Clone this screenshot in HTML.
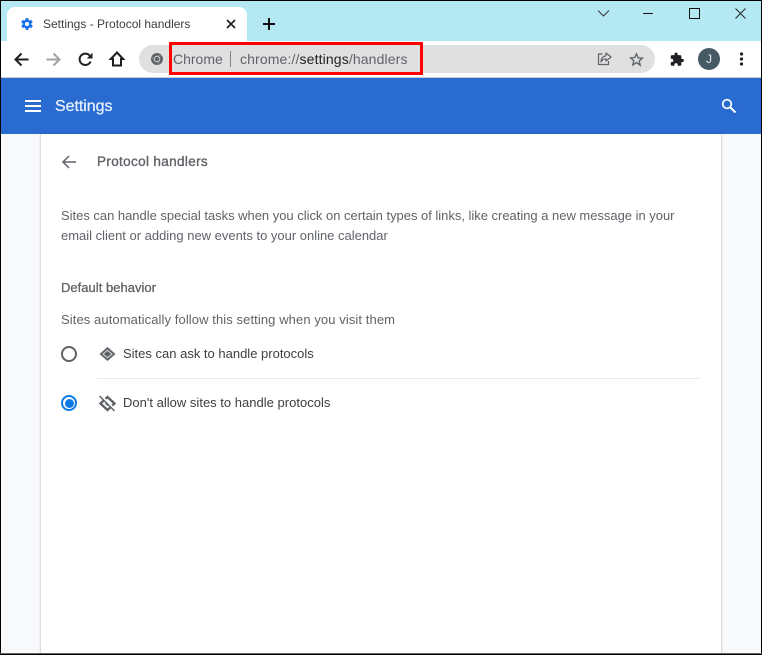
<!DOCTYPE html>
<html><head><meta charset="utf-8"><style>
html,body{margin:0;padding:0}
body{width:762px;height:655px;position:relative;overflow:hidden;background:#f8f9fa;font-family:"Liberation Sans",sans-serif}
.a{position:absolute}
.t{position:absolute;white-space:nowrap;line-height:16px}
svg{position:absolute;overflow:visible}
</style></head><body>
<div class="a" style="left:0;top:0;width:762px;height:41px;background:#b4e9f3"></div>
<div class="a" style="left:7px;top:7px;width:240px;height:34px;background:#fff;border-radius:8px 8px 0 0"></div>
<div class="a" style="left:0;top:41px;width:762px;height:36px;background:#fff"></div>
<div class="a" style="left:0;top:77px;width:762px;height:1px;background:#c8ccd0"></div>
<div class="a" style="left:0;top:78px;width:762px;height:56px;background:#296bd1"></div>
<div class="a" style="left:41px;top:134px;width:680px;height:521px;background:#fff;box-shadow:0 0 2px rgba(60,64,67,.45)"></div>

<svg style="left:20px;top:17px" width="14" height="14" viewBox="0 0 24 24"><path fill="#1a73e8" d="M19.4 13c.1-.3.1-.7.1-1s0-.7-.1-1l2.100-1.600c.2-.2.2-.4.1-.6l-2-3.500c-.1-.2-.4-.3-.6-.2l-2.500 1c-.5-.4-1.100-.7-1.700-1l-.4-2.600c0-.3-.2-.5-.5-.5h-4c-.3 0-.5.2-.5.4l-.4 2.700c-.6.2-1.200.6-1.700 1l-2.500-1c-.2-.1-.5 0-.6.2l-2 3.500c-.1.2-.1.4.1.6L4.600 11c-.1.3-.1.7-.1 1s0 .7.1 1l-2.100 1.600c-.2.2-.2.4-.1.6l2 3.500c.1.2.4.3.6.2l2.500-1c.5.4 1.100.7 1.700 1l.4 2.600c0 .3.2.5.5.5h4c.3 0 .5-.2.5-.4l.4-2.700c.6-.2 1.200-.6 1.700-1l2.500 1c.2.1.5 0 .6-.2l2-3.500c.1-.2.1-.4-.1-.6zM12 15.500a3.500 3.500 0 1 1 0-7 3.500 3.500 0 0 1 0 7z"/></svg>
<div class="t" style="left:43px;top:16px;font-size:12px;color:#3c4043;letter-spacing:0">Settings - Protocol handlers</div>
<svg style="left:226px;top:19px" width="10" height="10"><path d="M1 1l8 8M9 1l-8 8" stroke="#202124" stroke-width="1.700"/></svg>
<svg style="left:262px;top:17px" width="14" height="14"><path d="M7 1v12M1 7h12" stroke="#111" stroke-width="2"/></svg>

<svg style="left:597px;top:9px" width="14" height="9"><path d="M1 1.500l5.500 5.500 5.500-5.500" fill="none" stroke="#333" stroke-width="1"/></svg>
<div class="a" style="left:643px;top:13px;width:10px;height:1px;background:#111"></div>
<div class="a" style="left:689px;top:8px;width:9px;height:9px;border:1px solid #111"></div>
<svg style="left:735px;top:8px" width="11" height="11"><path d="M.5.500l10 10M10.500.500l-10 10" stroke="#222" stroke-width="1"/></svg>

<svg style="left:14px;top:52px" width="15" height="15"><path d="M14.500 7.500H2M7.500 1.500l-6 6 6 6" fill="none" stroke="#1d1d1f" stroke-width="2"/></svg>
<svg style="left:46px;top:52px" width="15" height="15"><path d="M.5 7.500H13M7.500 1.500l6 6-6 6" fill="none" stroke="#a0a3a6" stroke-width="2"/></svg>
<svg style="left:78px;top:52px" width="15" height="15" viewBox="0 0 15 15"><path d="M12.600 9.500A5.700 5.700 0 1 1 11.600 3.500" fill="none" stroke="#1d1d1f" stroke-width="2"/><path d="M14.500.800V6.500H8.800z" fill="#1d1d1f"/></svg>
<svg style="left:109px;top:51px" width="16" height="16"><path d="M8 1.500L1.800 8H4v6.500h8V8h2.200z" fill="none" stroke="#1d1d1f" stroke-width="2" stroke-linejoin="miter"/></svg>

<div class="a" style="left:139px;top:45px;width:516px;height:28px;border-radius:14px;background:#e0e0e0"></div>
<svg style="left:151px;top:53px" width="12" height="12"><circle cx="6" cy="6" r="6" fill="#5f6368"/><circle cx="6" cy="6" r="3.200" fill="#d8d8d8"/><circle cx="6" cy="6" r="2.300" fill="#5f6368"/><path d="M6 2.800h5M3.200 7.600L.8 3.500M8.800 7.600L6.300 12" stroke="#9a9a9a" stroke-width=".6"/></svg>
<div class="t" style="left:173px;top:51px;font-size:14px;color:#5f6368">Chrome</div>
<div class="a" style="left:230px;top:51px;width:1px;height:16px;background:#80868b"></div>
<div class="t" style="left:240px;top:51px;font-size:14px;color:#5f6368;letter-spacing:.13px">chrome://<span style="color:#202124">settings</span>/handlers</div>
<div class="a" style="left:169px;top:42px;width:248px;height:27px;border:3px solid #f00"></div>

<svg style="left:597px;top:52px" width="15" height="14" viewBox="0 0 15 14"><path d="M5.500 2H1.500v10.500h10V9" fill="none" stroke="#5f6368" stroke-width="1.200"/><path d="M9 1l5 4-5 4V6.800C6.500 6.800 5 7.800 4 10c0-3.500 2-6 5-6.200z" fill="none" stroke="#5f6368" stroke-width="1.200" stroke-linejoin="round"/></svg>
<svg style="left:629px;top:52px" width="15" height="15" viewBox="0 0 24 24"><path d="M12 3l2.700 6.300 6.800.6-5.200 4.500 1.600 6.700L12 17l-5.900 3.600 1.600-6.700-5.200-4.500 6.800-.6z" fill="none" stroke="#5f6368" stroke-width="2.200"/></svg>
<svg style="left:669px;top:52px" width="16" height="15" viewBox="0 0 24 24"><path fill="#202124" d="M20.500 11H19V7c0-1.100-.9-2-2-2h-4V3.500a2.500 2.500 0 0 0-5 0V5H4c-1.100 0-2 .9-2 2v3.800h1.500c1.500 0 2.700 1.200 2.700 2.700S5 16.200 3.500 16.200H2V20c0 1.100.9 2 2 2h3.800v-1.500c0-1.500 1.200-2.700 2.700-2.700s2.700 1.200 2.700 2.700V22H17c1.100 0 2-.9 2-2v-4h1.500a2.500 2.500 0 0 0 0-5z"/></svg>
<div class="a" style="left:698px;top:48px;width:22px;height:22px;border-radius:50%;background:#455a64;color:#e8ecee;font-size:12px;line-height:22px;text-align:center">J</div>
<svg style="left:739px;top:52px" width="5" height="14"><circle cx="2.500" cy="2" r="1.600" fill="#202124"/><circle cx="2.500" cy="7" r="1.600" fill="#202124"/><circle cx="2.500" cy="12" r="1.600" fill="#202124"/></svg>

<svg style="left:25px;top:100px" width="16" height="12"><path d="M0 1h16M0 6h16M0 11h16" stroke="#fff" stroke-width="2"/></svg>
<div class="t" style="left:55px;top:99px;font-size:16px;letter-spacing:-.05px;color:#e8f0fe;-webkit-text-stroke:.25px #e8f0fe">Settings</div>
<svg style="left:721px;top:98px" width="16" height="16"><circle cx="6" cy="6" r="4.300" fill="none" stroke="#fff" stroke-width="1.700"/><path d="M9.300 9.300l5.200 5.200" stroke="#fff" stroke-width="2"/></svg>

<svg style="left:61px;top:155px" width="15" height="14"><path d="M15 7H2M8 1L2 7l6 6" fill="none" stroke="#5f6368" stroke-width="1.500"/></svg>
<div class="t" style="left:97px;top:154px;font-size:13.500px;letter-spacing:.35px;color:#5f6368;-webkit-text-stroke:.35px #5f6368">Protocol handlers</div>

<div class="t" style="left:61px;top:208px;font-size:13px;color:#5f6368;letter-spacing:-.02px">Sites can handle special tasks when you click on certain types of links, like creating a new message in your</div>
<div class="t" style="left:61px;top:228px;font-size:13px;color:#5f6368;letter-spacing:-.01px">email client or adding new events to your online calendar</div>
<div class="t" style="left:61px;top:280px;font-size:13px;color:#5f6368;letter-spacing:.02px;-webkit-text-stroke:.3px #5f6368">Default behavior</div>
<div class="t" style="left:61px;top:312px;font-size:13px;color:#5f6368;letter-spacing:.09px">Sites automatically follow this setting when you visit them</div>

<div class="a" style="left:61px;top:346px;width:12px;height:12px;border:2px solid #5f6368;border-radius:50%"></div>
<svg style="left:99px;top:346px" width="17" height="16" viewBox="0 0 17 16"><path d="M8.500 1L16.500 8 8.500 15 .5 8z" fill="#5f6368"/><path d="M8.500 4.200L13 8 8.500 11.800 4 8z" fill="#5f6368" stroke="#d5d6d8" stroke-width="1"/></svg>
<div class="t" style="left:123px;top:346px;font-size:13px;color:#3c4043;letter-spacing:0">Sites can ask to handle protocols</div>
<div class="a" style="left:97px;top:378px;width:603px;height:1px;background:#e8eaed"></div>
<div class="a" style="left:61px;top:395px;width:12px;height:12px;border:2px solid #0d7ae6;border-radius:50%"></div>
<div class="a" style="left:64.500px;top:398.500px;width:9px;height:9px;background:#0d7ae6;border-radius:50%"></div>
<svg style="left:99px;top:395px" width="17" height="17" viewBox="0 0 17 17"><path d="M8.500 2L15.500 8.500 8.500 15 1.500 8.500z" fill="none" stroke="#5f6368" stroke-width="2.400"/><path d="M8.500 6l2.700 2.500-2.700 2.500-2.700-2.500z" fill="#5f6368"/><path d="M1.500 .5l15 15" stroke="#fff" stroke-width="2.500"/><path d="M.5 1l15 15" stroke="#5f6368" stroke-width="1.500"/></svg>
<div class="t" style="left:123px;top:395px;font-size:13px;color:#3c4043;letter-spacing:.01px">Don't allow sites to handle protocols</div>

<div class="a" style="left:0;top:0;width:762px;height:1px;background:#000"></div>
<div class="a" style="left:0;top:0;width:1px;height:655px;background:#000"></div>
<div class="a" style="left:761px;top:0;width:1px;height:655px;background:#000"></div>
<div class="a" style="left:0;top:653px;width:762px;height:1px;background:#666"></div>
<div class="a" style="left:0;top:654px;width:762px;height:1px;background:#000"></div>
</body></html>
